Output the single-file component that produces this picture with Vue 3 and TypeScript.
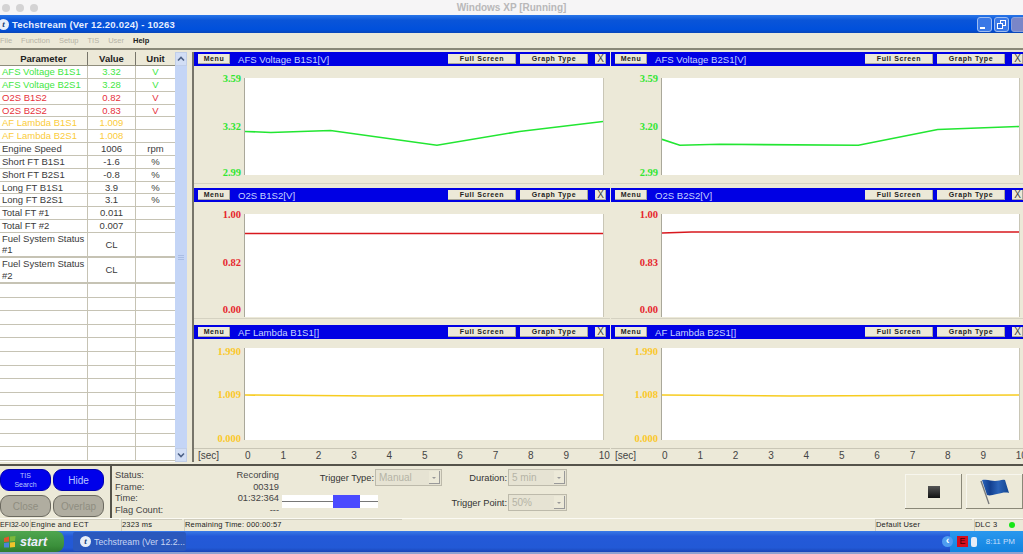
<script setup lang="ts">
interface Row { p: string; v: string; u: string; c?: string; kind?: string }
const rows: Row[] = [
  { p: 'AFS Voltage B1S1', v: '3.32', u: 'V', c: 'green' },
  { p: 'AFS Voltage B2S1', v: '3.28', u: 'V', c: 'green' },
  { p: 'O2S B1S2', v: '0.82', u: 'V', c: 'red' },
  { p: 'O2S B2S2', v: '0.83', u: 'V', c: 'red' },
  { p: 'AF Lambda B1S1', v: '1.009', u: '', c: 'yellow' },
  { p: 'AF Lambda B2S1', v: '1.008', u: '', c: 'yellow' },
  { p: 'Engine Speed', v: '1006', u: 'rpm' },
  { p: 'Short FT B1S1', v: '-1.6', u: '%' },
  { p: 'Short FT B2S1', v: '-0.8', u: '%' },
  { p: 'Long FT B1S1', v: '3.9', u: '%' },
  { p: 'Long FT B2S1', v: '3.1', u: '%' },
  { p: 'Total FT #1', v: '0.011', u: '' },
  { p: 'Total FT #2', v: '0.007', u: '' },
  { p: 'Fuel System Status #1', v: 'CL', u: '', kind: 'tall' },
  { p: 'Fuel System Status #2', v: 'CL', u: '', kind: 'tall' },
  ...Array.from({ length: 13 }, () => ({ p: '', v: '', u: '', kind: 'blank' }))
]
interface Graph { t: string; c: string; r: number; h: number; hi: string; mid: string; lo: string; pos: number[]; pts: string }
const graphs: Graph[] = [
  { t: 'AFS Voltage B1S1[V]', c: 'green', r: 1, h: 98, hi: '3.59', mid: '3.32', lo: '2.99', pos: [1, 50, 98], pts: '0,54 26,55 86,53 193,68 276,54 360,44' },
  { t: 'AFS Voltage B2S1[V]', c: 'green', r: 1, h: 98, hi: '3.59', mid: '3.20', lo: '2.99', pos: [1, 50, 98], pts: '0,62 18,68 58,67 198,68 278,52 360,49' },
  { t: 'O2S B1S2[V]', c: 'red', r: 2, h: 103, hi: '1.00', mid: '0.82', lo: '0.00', pos: [1, 47.6, 93], pts: '0,19.5 360,19.5' },
  { t: 'O2S B2S2[V]', c: 'red', r: 2, h: 103, hi: '1.00', mid: '0.83', lo: '0.00', pos: [1, 47.6, 93], pts: '0,19 30,18 360,18' },
  { t: 'AF Lambda B1S1[]', c: 'yellow', r: 3, h: 92, hi: '1.990', mid: '1.009', lo: '0.000', pos: [4.5, 51, 99], pts: '0,47 130,48 360,47' },
  { t: 'AF Lambda B2S1[]', c: 'yellow', r: 3, h: 92, hi: '1.990', mid: '1.008', lo: '0.000', pos: [4.5, 51, 99], pts: '0,47 130,48 360,47' }
]
const ticks = Array.from({ length: 11 }, (_, i) => i)
</script>

<template>
  <div class="page">
    <div class="mac">
      <div class="dots"><i></i><i></i><i></i></div>
      <div class="mac-title">Windows XP [Running]</div>
    </div>
    <div class="titlebar">
      <span class="appicon">t</span>
      <span class="apptitle">Techstream (Ver 12.20.024) - 10263</span>
      <div class="winbtns">
        <span class="wb"><svg viewBox="0 0 13 13" width="13" height="13"><rect x="2" y="9" width="5" height="2" fill="#fff"/></svg></span>
        <span class="wb"><svg viewBox="0 0 13 13" width="13" height="13" fill="none" stroke="#fff"><rect x="5.5" y="2.5" width="5" height="5"/><rect x="2.5" y="5.5" width="5" height="5" fill="#2a6be0"/></svg></span>
        <span class="wb close"></span>
      </div>
    </div>
    <div class="menubar">
      <span>File</span><span>Function</span><span>Setup</span><span>TIS</span><span>User</span><span class="on">Help</span>
    </div>
    <div class="main">
      <div class="left">
        <div class="table">
          <div class="tr head"><div class="c1">Parameter</div><div class="c2">Value</div><div class="c3">Unit</div></div>
          <div v-for="(r, i) in rows" :key="i" class="tr" :class="[r.c, r.kind]">
            <div class="c1">{{ r.p }}</div><div class="c2">{{ r.v }}</div><div class="c3">{{ r.u }}</div>
          </div>
        </div>
        <div class="scroll">
          <span class="sb"><svg viewBox="0 0 10 10" width="10" height="10" fill="none" stroke="#4d6185" stroke-width="1.6"><path d="M2 6.5 5 3.5 8 6.5"/></svg></span>
          <span class="track"><i class="grip"></i></span>
          <span class="sb"><svg viewBox="0 0 10 10" width="10" height="10" fill="none" stroke="#4d6185" stroke-width="1.6"><path d="M2 3.5 5 6.5 8 3.5"/></svg></span>
        </div>
      </div>
      <div class="split"></div>
      <div class="graphs">
        <div v-for="g in graphs" :key="g.t" class="graph" :class="[g.c, 'r' + g.r]">
          <div class="ghead">
            <span class="gbtn menu">Menu</span>
            <span class="gtitle">{{ g.t }}</span>
            <span class="gbtn fs">Full Screen</span>
            <span class="gbtn gt">Graph Type</span>
            <span class="gbtn x">X</span>
          </div>
          <div class="gbody">
            <div class="axis">
              <span :style="{ top: g.pos[0] + '%' }">{{ g.hi }}</span>
              <span :style="{ top: g.pos[1] + '%' }">{{ g.mid }}</span>
              <span :style="{ top: g.pos[2] + '%' }">{{ g.lo }}</span>
            </div>
            <div class="plot">
              <svg :viewBox="`0 0 360 ${g.h}`" preserveAspectRatio="none"><polyline :points="g.pts" fill="none" stroke-width="1.6" /></svg>
            </div>
          </div>
        </div>
        <div class="xaxis"><span class="sec">[sec]</span><div class="ticks"><span v-for="t in ticks" :key="t">{{ t }}</span></div></div>
        <div class="xaxis"><span class="sec">[sec]</span><div class="ticks"><span v-for="t in ticks" :key="t">{{ t }}</span></div></div>
      </div>
    </div>
    <div class="panel">
      <div class="pills">
        <span class="pill blue small">TIS<br />Search</span>
        <span class="pill blue">Hide</span>
        <span class="pill grey">Close</span>
        <span class="pill grey">Overlap</span>
      </div>
      <div class="status">
        <div class="slabels"><span>Status:</span><span>Frame:</span><span>Time:</span><span>Flag Count:</span></div>
        <div class="svalues"><span>Recording</span><span>00319</span><span>01:32:364</span><span>---</span></div>
      </div>
      <div class="trigger">
        <div class="tt"><span>Trigger Type:</span><span class="combo w70">Manual<b></b></span></div>
        <div class="slider"><i class="knob"></i></div>
      </div>
      <div class="dur">
        <div class="dr"><span>Duration:</span><span class="combo w60">5 min<b></b></span></div>
        <div class="dr"><span>Trigger Point:</span><span class="combo w60">50%<b></b></span></div>
      </div>
      <div class="acts">
        <span class="act"><i class="stop"></i></span>
        <span class="act">
          <svg viewBox="0 0 30 26" width="30" height="26">
            <defs><linearGradient id="fl" x1="0" x2="1" y1="0" y2="0"><stop offset="0" stop-color="#2b63b8"/><stop offset=".3" stop-color="#123f8f"/><stop offset=".6" stop-color="#2b63b8"/><stop offset="1" stop-color="#14458f"/></linearGradient></defs>
            <path d="M1 2 9 25" stroke="#77787a" stroke-width="1.3" fill="none"/>
            <path d="M2 1C8 0 11 2 15 2S22 0 25 1L29 14C25 13 22 14 17 15S10 17 7 16Z" fill="url(#fl)"/>
          </svg>
        </span>
      </div>
    </div>
    <div class="statusbar">
      <span class="sc s1">EFI32-00</span>
      <span class="sc s2">Engine and ECT</span>
      <span class="sc s3">2323 ms</span>
      <span class="sc s4">Remaining Time: 000:00:57</span>
      <span class="sc s5">Default User</span>
      <span class="sc s6">DLC 3<i class="led"></i></span>
    </div>
    <div class="taskbar">
      <div class="start">
        <svg viewBox="0 0 14 14" width="14" height="14"><path d="M1 3 6 1.5 6 6.5 1 7Z" fill="#e2562c"/><path d="M7 1.5 12.5 1 12 6 7 6.5Z" fill="#7cb93a"/><path d="M1 8 6 7.5 6 12.5 1 12.5Z" fill="#4b84d8"/><path d="M7 7.5 12 7 12 12 7 12.5Z" fill="#f0c42c"/></svg>
        <span>start</span>
      </div>
      <div class="task"><span class="appicon sm">t</span><span>Techstream (Ver 12.2...</span></div>
      <div class="tray">
        <span class="chev">‹</span>
        <span class="redbox">E</span>
        <span class="usb"></span>
        <span class="clock">8:11 PM</span>
      </div>
    </div>
    <div class="foot"></div>
  </div>
</template>

<style>
html, body { margin: 0; padding: 0; background: #ece9d8; overflow: hidden; }
</style>

<style scoped>
.page { width: 1023px; height: 554px; display: flex; flex-direction: column; font-family: "Liberation Sans", Arial, sans-serif; background: #ece9d8; overflow: hidden; color: #222; }
.mac { flex: 0 0 15px; background: #f6f5f6; display: flex; align-items: center; position: relative; }
.dots { display: flex; gap: 6px; padding-left: 2px; }
.dots i { width: 8px; height: 8px; border-radius: 50%; background: #d4d3d4; }
.mac-title { position: absolute; left: 0; right: 0; text-align: center; font-size: 10px; font-weight: 700; color: #b9b8b9; }
.titlebar { flex: 0 0 18px; background: linear-gradient(#2a76e8, #0a55d8 30%, #0050dc 80%, #0a46b8); display: flex; align-items: center; color: #fff; }
.appicon { width: 11px; height: 11px; border-radius: 50%; background: #e8eef8; color: #123a7a; font: italic 700 9px/11px "Liberation Serif", serif; text-align: center; margin-left: -2px; flex: none; }
.apptitle { font-size: 9.5px; font-weight: 700; margin-left: 3px; letter-spacing: .2px; color: #e6eeff; }
.winbtns { margin-left: auto; display: flex; gap: 2px; }
.wb { width: 15px; height: 15px; border-radius: 3px; border: 1px solid #9fbdf0; background: #3a78e6; display: block; box-sizing: border-box; }
.wb svg { display: block; }
.wb.close { background: #7a86c8; border-color: #8aa0d8; margin-right: -3px; }
.menubar { flex: 0 0 15px; background: #ece9d8; display: flex; align-items: center; gap: 9px; font-size: 7.5px; color: #b5b3a6; }
.menubar .on { color: #222; font-weight: 700; }
.main { flex: 0 0 416px; display: flex; border-top: 2px solid #8a8878; box-sizing: border-box; padding-top: 2px; }
.left { flex: 0 0 187px; display: flex; height: 410px; }
.table { flex: 0 0 175px; background: #fff; overflow: hidden; }
.tr { display: flex; height: 12.85px; box-sizing: border-box; border-bottom: 1px solid #c6c3b4; font-size: 9.5px; line-height: 12px; color: #3a3a3a; }
.tr > div { box-sizing: border-box; border-right: 1px solid #c6c3b4; overflow: hidden; }
.c1 { flex: 0 0 88px; padding-left: 2px; }
.c2 { flex: 0 0 48px; text-align: center; }
.c3 { flex: 0 0 39px; text-align: center; border-right: 0 !important; }
.tr.head { height: 14px; background: #ece9d8; font-weight: 700; font-size: 9.5px; line-height: 13px; color: #222; border-bottom: 1px solid #8f8d7c; }
.tr.head > div { border-right: 1px solid #77756a; text-align: center; padding: 0; }
.tr.green { color: #3fe83f; }
.tr.red { color: #e6303a; }
.tr.yellow { color: #fbcc3a; }
.tr.tall { height: 25.5px; border-bottom-width: 2px; }
.tr.tall .c1 { line-height: 11.5px; }
.tr.tall .c2 { line-height: 23px; }
.tr.blank { height: 13.6px; }
.scroll { flex: 0 0 12px; display: flex; flex-direction: column; background: #e4ecfa; }
.sb { flex: 0 0 14px; background: #d2def5; border: 1px solid #c0cee8; box-sizing: border-box; display: flex; align-items: center; justify-content: center; }
.track { flex: 1; background: #c4d5f6; display: flex; align-items: center; justify-content: center; }
.grip { width: 6px; height: 5px; background: repeating-linear-gradient(#a9bde4 0 1px, transparent 1px 2px); display: block; }
.split { flex: 0 0 7px; background: #ece9d8; border-right: 2px solid #77756a; box-sizing: border-box; height: 410px; }
.graphs { flex: 1; display: grid; grid-template-columns: 416px 416px; grid-template-rows: 136px 137px 123px 14px; column-gap: 1px; overflow: hidden; height: 410px; }
.graph { display: flex; flex-direction: column; min-width: 0; }
.ghead { flex: 0 0 14px; background: #0000e4; display: flex; align-items: center; color: #fff; }
.gbtn { height: 10px; background: #ece9d8; color: #222; font-size: 7px; font-weight: 700; line-height: 10px; text-align: center; letter-spacing: .6px; box-shadow: inset -1px -1px 0 #aaa89a; flex: none; }
.menu { width: 32px; margin-left: 4px; }
.gtitle { font-size: 9.6px; color: #c6d4ff; margin-left: 8px; flex: 1; white-space: nowrap; }
.fs { width: 68px; }
.gt { width: 68px; margin-left: 4px; }
.x { width: 11px; margin: 0 4px 0 7px; font-size: 10px; font-weight: 400; letter-spacing: 0; color: #444; }
.gbody { flex: 1; display: flex; padding-right: 6px; min-height: 0; position: relative; }
.graph:nth-of-type(even) .gbody { padding-right: 7px; }
.gbody::after { content: ""; position: absolute; left: 0; right: 0; height: 1px; background: #d5d2c2; }
.r1 .gbody { padding-top: 12px; padding-bottom: 13px; }
.r1 .gbody::after { bottom: 4px; }
.r2 .gbody { padding-top: 12px; padding-bottom: 8px; }
.r2 .gbody::after { bottom: 6px; }
.r3 .gbody { padding-top: 9px; padding-bottom: 8px; }
.r3 .gbody::after { display: none; }
.axis { flex: 0 0 50px; position: relative; }
.axis span { position: absolute; right: 3px; transform: translateY(-50%); line-height: 10px; font-family: "Liberation Serif", serif; font-weight: 700; font-size: 10.5px; }
.green .axis { color: #32e632; } .red .axis { color: #e6262c; } .yellow .axis { color: #fbc82a; }
.plot { flex: 1; background: #fff; border-left: 1px solid #aaa89a; border-right: 1px solid #c9c6b6; min-width: 0; }
.plot svg { display: block; width: 100%; height: 100%; }
.green polyline { stroke: #22e632; } .red polyline { stroke: #d8181e; } .yellow polyline { stroke: #f7cc20; }
.xaxis { display: flex; align-items: center; font-size: 10px; color: #444; border-top: 1px solid #c9c6b6; box-sizing: border-box; }
.sec { flex: 0 0 30px; padding-left: 4px; box-sizing: border-box; }
.ticks { flex: 1; display: flex; justify-content: space-between; padding: 0 0 0 21px; }
.panel { flex: 0 0 54px; box-sizing: border-box; border-top: 2px solid #55534a; display: flex; position: relative; background: #ece9d8; }
.pills { flex: 0 0 110px; display: grid; grid-template-columns: 51px 51px; gap: 4px 2px; padding: 3px 0 0 0; align-content: start; box-sizing: border-box; }
.pill { height: 22px; border-radius: 9px; text-align: center; font-size: 10px; line-height: 21px; border: 1px solid #555; box-sizing: border-box; }
.blue { background: #0000ea; color: #b9c8ff; border-color: #0000b0; }
.small { font-size: 7px; line-height: 9px; padding-top: 1px; }
.grey { background: #b0ada0; color: #8f8d80; border-color: #6c6a60; }
.status { flex: 0 0 170px; border-left: 2px solid #55534a; display: flex; justify-content: space-between; padding: 4px 1px 0 3px; box-sizing: border-box; font-size: 9.3px; line-height: 11.5px; color: #444; }
.slabels, .svalues { display: flex; flex-direction: column; }
.svalues { text-align: right; width: 70px; }
.trigger { flex: 0 0 165px; display: flex; flex-direction: column; font-size: 9.3px; box-sizing: border-box; }
.tt { display: flex; justify-content: flex-end; align-items: center; gap: 1px; height: 17px; margin-top: 3px; padding-right: 3px; white-space: nowrap; color: #333; }
.slider { margin: 9px 0 0 2px; width: 96px; height: 13px; background: linear-gradient(#fff 0 46%, #777 46% 54%, #fff 54%); position: relative; }
.knob { position: absolute; left: 51px; top: 0; width: 27px; height: 13px; background: #4a4aff; }
.combo { height: 17px; background: #e6e3d3; border: 1px solid #bdbaab; box-sizing: border-box; color: #b5b3a6; font-size: 10px; line-height: 15px; padding-left: 3px; position: relative; display: block; }
.combo b { position: absolute; right: 1px; top: 1px; bottom: 1px; width: 11px; background: #ece9d8; box-shadow: inset -1px -1px 0 #999; }
.combo b::after { content: ""; position: absolute; left: 3px; top: 6px; border: 2.5px solid transparent; border-top-color: #999; border-bottom: 0; }
.w70 { width: 67px; } .w60 { width: 59px; }
.dur { flex: 0 0 122px; display: flex; flex-direction: column; gap: 8px; font-size: 9.3px; padding-top: 3px; align-items: flex-end; box-sizing: border-box; }
.dr { display: flex; align-items: center; gap: 1px; color: #333; white-space: nowrap; }
.acts { margin-left: auto; display: flex; gap: 4px; padding-top: 8px; }
.act { width: 57px; height: 35px; background: #ece9d8; box-shadow: inset -1px -1px 0 #8a8878, inset 1px 1px 0 #f7f6ee; display: flex; align-items: center; justify-content: center; }
.stop { width: 12px; height: 12px; background: linear-gradient(#555, #111); display: block; }
.statusbar { flex: 0 0 13px; display: flex; gap: 2px; font-size: 7.5px; line-height: 12px; letter-spacing: .2px; border-top: 1px solid #fbfaf3; box-sizing: border-box; background: #ece9d8; }
.sc { box-shadow: inset 1px 1px 0 #cfccbc; height: 12px; padding-left: 1px; white-space: nowrap; box-sizing: border-box; display: block; }
.s1 { width: 28px; box-shadow: none; padding-left: 0; font-size: 7px; letter-spacing: 0; }
.s2 { width: 89px; }
.s3 { width: 61px; }
.s4 { width: 218px; flex: none; }
.s5 { margin-left: auto; width: 97px; }
.s6 { width: 49px; position: relative; }
.led { position: absolute; right: 8px; top: 3px; width: 6px; height: 6px; border-radius: 50%; background: #16e616; }
.taskbar { flex: 0 0 21px; background: linear-gradient(#3a7ae6, #2459d8 25%, #2259d6 80%, #1a46b8); display: flex; align-items: center; color: #dfe8ff; position: relative; }
.start { width: 64px; height: 21px; background: linear-gradient(#4fa64f, #3b903b 70%, #2e7a2e); border-radius: 0 8px 8px 0; display: flex; align-items: center; gap: 3px; padding-left: 3px; box-sizing: border-box; font: italic 700 12.5px "Liberation Sans", sans-serif; color: #eef; }
.task { margin-left: 9px; width: 113px; height: 19px; background: #2a58bd; border-radius: 2px; display: flex; align-items: center; gap: 3px; padding-left: 7px; box-sizing: border-box; font-size: 8.8px; white-space: nowrap; color: #c8d6f4; }
.appicon.sm { margin: 0; }
.tray { margin-left: auto; width: 73px; height: 21px; background: linear-gradient(#2a98ee, #1284e0); display: flex; align-items: center; box-sizing: border-box; font-size: 8px; }
.chev { width: 11px; height: 11px; border-radius: 50%; background: #4e9cf0; color: #fff; text-align: center; font: 700 11px/9px "Liberation Sans", sans-serif; margin-left: -8px; flex: none; }
.redbox { width: 11px; height: 11px; background: #d40f1e; color: #400; font-size: 9px; line-height: 11px; text-align: center; margin-left: 4px; flex: none; }
.usb { width: 6px; height: 10px; background: #e6ecf6; border-radius: 2px; margin-left: 3px; flex: none; }
.clock { margin-left: auto; margin-right: 8px; color: #c4ddfa; }
.foot { flex: 1; background: #8fa0d0; }
</style>
